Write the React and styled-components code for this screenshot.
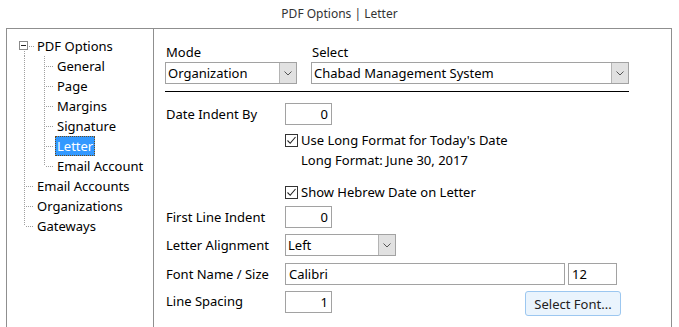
import React from 'react';
import styled, { createGlobalStyle, css } from 'styled-components';

const GlobalStyle = createGlobalStyle`
  html, body {
    margin: 0;
    padding: 0;
    background: #ffffff;
  }
  body {
    font-family: "Noto Sans", "Open Sans", sans-serif;
    font-size: 13px;
    color: #000;
  }
`;

const Window = styled.div`
  width: 679px;
  height: 327px;
  overflow: hidden;
  display: flex;
  flex-direction: column;
`;

const TitleBar = styled.div`
  height: 28px;
  display: flex;
  align-items: center;
  justify-content: center;
  font-size: 12px;
  color: #333;
  padding-bottom: 1px;
  box-sizing: border-box;
`;

const Frame = styled.div`
  flex: 1;
  margin: 0 7px 0 6px;
  border: 1px solid #8f8f8f;
  border-bottom: none;
  display: flex;
`;

const TreePane = styled.div`
  width: 147px;
  border-right: 1px solid #8f8f8f;
  padding: 7px 0 0 7px;
  box-sizing: border-box;
`;

const dot = '#a0a0a0';
const vLine = (full) => css`
  repeating-linear-gradient(to bottom, ${dot} 0 1px, transparent 1px 2px) 10px 0 / 1px ${full ? '100%' : '10px'} no-repeat
`;
const hLine = css`
  repeating-linear-gradient(to right, ${dot} 0 1px, transparent 1px 2px) 12px 10px / 9px 1px no-repeat
`;

const Connector = styled.span`
  width: 20px;
  height: 20px;
  flex: none;
  position: relative;
  ${({ $kind }) => $kind === 'pass' && css`background: ${vLine(true)};`}
  ${({ $kind }) => $kind === 'mid' && css`background: ${hLine}, ${vLine(true)};`}
  ${({ $kind }) => $kind === 'last' && css`background: ${hLine}, ${vLine(false)};`}
  ${({ $kind }) => $kind === 'root' && css`
    background:
      repeating-linear-gradient(to right, ${dot} 0 1px, transparent 1px 2px) 15px 10px / 6px 1px no-repeat,
      repeating-linear-gradient(to bottom, ${dot} 0 1px, transparent 1px 2px) 10px 15px / 1px 5px no-repeat;
  `}
`;

const Expander = styled.span`
  position: absolute;
  left: 5px;
  top: 5px;
  width: 9px;
  height: 9px;
  box-sizing: border-box;
  border: 1px solid #8a8a8a;
  background: #fff;
  &::after {
    content: '';
    position: absolute;
    left: 1px;
    top: 3px;
    width: 5px;
    height: 1px;
    background: #222;
  }
`;

const TreeRow = styled.div`
  display: flex;
  align-items: center;
  height: 20px;
`;

const TreeLabel = styled.span`
  margin-left: 1px;
  padding: 0 1px;
  line-height: 18px;
  border: 1px solid transparent;
  white-space: nowrap;
  ${({ $selected }) => $selected && css`
    background: #3399ff;
    color: #fff;
    border: 1px dotted #6b4a1c;
  `}
`;

const ContentPane = styled.div`
  flex: 1;
  padding: 15px 0 0 11px;
`;

const Header = styled.div`
  display: flex;
  gap: 14px;
  width: 464px;
`;

const Field = styled.div`
  display: flex;
  flex-direction: column;
  width: ${({ $w }) => $w}px;
`;

const FieldLabel = styled.div`
  height: 18px;
  line-height: 16px;
  padding-left: 1px;
`;

const ComboBox = styled.div`
  width: ${({ $w }) => ($w ? `${$w}px` : '100%')};
  height: 22px;
  box-sizing: border-box;
  border: 1px solid #a2a2a2;
  background: #fff;
  display: flex;
  align-items: stretch;
`;

const ComboText = styled.div`
  flex: 1;
  padding-left: 2px;
  line-height: 20px;
  white-space: nowrap;
  overflow: hidden;
`;

const ComboButton = styled.div`
  width: 16px;
  background: #e1e1e1;
  border-left: 1px solid #b4b4b4;
  display: flex;
  align-items: center;
  justify-content: center;
`;

const Rule = styled.div`
  width: 464px;
  height: 1px;
  background: #000;
  margin-top: 7px;
`;

const Form = styled.div`
  display: flex;
  flex-direction: column;
  width: 464px;
  margin-top: 11px;
`;

const Row = styled.div`
  display: flex;
  align-items: ${({ $top }) => ($top ? 'flex-start' : 'center')};
  height: ${({ $h }) => $h || 22}px;
  margin-top: ${({ $mt }) => $mt || 0}px;
`;

const Label = styled.div`
  width: 120px;
  flex: none;
  padding-left: 1px;
  box-sizing: border-box;
  white-space: nowrap;
  ${({ $top }) => $top && css`line-height: 20px;`}
`;

const TextBox = styled.div`
  width: ${({ $w }) => $w}px;
  height: 22px;
  box-sizing: border-box;
  border: 1px solid #a2a2a2;
  background: #fff;
  line-height: 20px;
  padding: 0 3px;
  text-align: ${({ $right }) => ($right ? 'right' : 'left')};
  margin-left: ${({ $ml }) => $ml || 0}px;
  white-space: nowrap;
`;

const CheckLine = styled.label`
  display: flex;
  align-items: center;
  gap: 3px;
  white-space: nowrap;
`;

const CheckBox = styled.span`
  width: 13px;
  height: 13px;
  box-sizing: border-box;
  border: 1px solid #333;
  display: inline-flex;
  align-items: center;
  justify-content: center;
`;

const Note = styled.div`
  padding-left: 16px;
  white-space: nowrap;
`;

const Button = styled.button`
  margin-left: auto;
  margin-right: 8px;
  width: 96px;
  height: 25px;
  border: 1px solid #9cc7f0;
  border-radius: 3px;
  background: #eaf4fd;
  font-family: inherit;
  font-size: 13px;
  color: #222;
  padding: 0;
`;

const Chevron = () => (
  <svg width="8" height="5" viewBox="0 0 8 5">
    <path d="M0.5 0.5 L4 4 L7.5 0.5" fill="none" stroke="#555" strokeWidth="1" />
  </svg>
);

const Check = () => (
  <svg width="11" height="11" viewBox="0 0 11 11">
    <path d="M1.5 5.5 L4.2 8.3 L9.5 2" fill="none" stroke="#222" strokeWidth="1.1" />
  </svg>
);

const Combo = ({ value, width }) => (
  <ComboBox $w={width}>
    <ComboText>{value}</ComboText>
    <ComboButton>
      <Chevron />
    </ComboButton>
  </ComboBox>
);

const treeRows = [
  { label: 'PDF Options', cols: ['root'] },
  { label: 'General', cols: ['pass', 'mid'] },
  { label: 'Page', cols: ['pass', 'mid'] },
  { label: 'Margins', cols: ['pass', 'mid'] },
  { label: 'Signature', cols: ['pass', 'mid'] },
  { label: 'Letter', cols: ['pass', 'mid'], selected: true },
  { label: 'Email Account', cols: ['pass', 'last'] },
  { label: 'Email Accounts', cols: ['mid'] },
  { label: 'Organizations', cols: ['mid'] },
  { label: 'Gateways', cols: ['last'] },
];

const App = () => (
  <Window>
    <GlobalStyle />
    <TitleBar>PDF Options | Letter</TitleBar>
    <Frame>
      <TreePane>
        {treeRows.map((row) => (
          <TreeRow key={row.label}>
            {row.cols.map((kind, i) => (
              <Connector key={i} $kind={kind}>
                {kind === 'root' && <Expander />}
              </Connector>
            ))}
            <TreeLabel $selected={row.selected}>{row.label}</TreeLabel>
          </TreeRow>
        ))}
      </TreePane>

      <ContentPane>
        <Header>
          <Field $w={132}>
            <FieldLabel>Mode</FieldLabel>
            <Combo value="Organization" />
          </Field>
          <Field $w={318}>
            <FieldLabel>Select</FieldLabel>
            <Combo value="Chabad Management System" />
          </Field>
        </Header>
        <Rule />

        <Form>
          <Row>
            <Label>Date Indent By</Label>
            <TextBox $w={47} $right>0</TextBox>
          </Row>
          <Row $h={20} $mt={5}>
            <Label />
            <CheckLine>
              <CheckBox><Check /></CheckBox>
              Use Long Format for Today's Date
            </CheckLine>
          </Row>
          <Row $h={20}>
            <Label />
            <Note>Long Format: June 30, 2017</Note>
          </Row>
          <Row $h={20} $mt={12}>
            <Label />
            <CheckLine>
              <CheckBox><Check /></CheckBox>
              Show Hebrew Date on Letter
            </CheckLine>
          </Row>
          <Row $mt={4}>
            <Label>First Line Indent</Label>
            <TextBox $w={47} $right>0</TextBox>
          </Row>
          <Row $mt={6}>
            <Label>Letter Alignment</Label>
            <Combo value="Left" width={111} />
          </Row>
          <Row $mt={7}>
            <Label>Font Name / Size</Label>
            <TextBox $w={280}>Calibri</TextBox>
            <TextBox $w={49} $ml={3}>12</TextBox>
          </Row>
          <Row $mt={6} $h={25} $top>
            <Label $top>Line Spacing</Label>
            <TextBox $w={47} $right>1</TextBox>
            <Button>Select Font...</Button>
          </Row>
        </Form>
      </ContentPane>
    </Frame>
  </Window>
);

export default App;
